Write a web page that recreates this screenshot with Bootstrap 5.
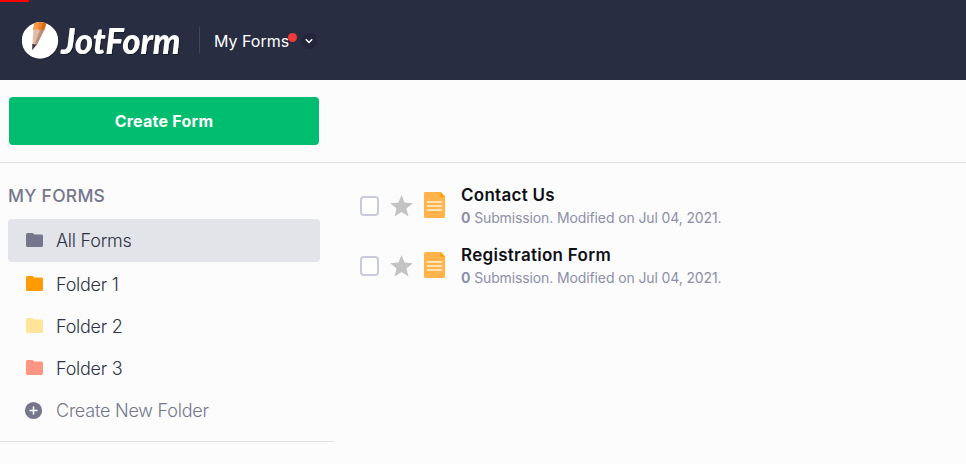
<!DOCTYPE html>
<html lang="en">
<head>
<meta charset="utf-8">
<meta name="viewport" content="width=device-width, initial-scale=1">
<title>My Forms</title>
<link rel="stylesheet" href="https://cdn.jsdelivr.net/npm/bootstrap@5.3.0/dist/css/bootstrap.min.css">
<style>
body{font-family:Inter,"Liberation Sans",sans-serif;background:#fcfcfd;color:#2c3345;height:464px;overflow:hidden}
.topbar{height:80px;background:#282d42;padding:0 22px}
.loader{width:29px;height:2px;background:#f00}
.brand{width:162px;height:64px}
.divider{width:1px;height:26px;background:#41465a;margin-left:15px}
.section-name{font-size:16px;line-height:24px;letter-spacing:0;margin-left:14px;padding-top:2px}
.dot{width:9px;height:9px;background:#f23a3c;left:74px;top:6px}
.chev{width:16px;height:16px;background:#212638;margin-left:12px;margin-top:2px}
.toolbar{height:83px;border-bottom:1px solid #e1e2e6;padding:17px 9px}
.btn-create{width:310px;height:48px;background:#01bd6f;border:0;border-radius:4px;font-size:16px;font-weight:700;letter-spacing:.25px}
.btn-create:hover{background:#01a862}
.side{width:334px;height:279px;border-bottom:1px solid #e1e2e6;padding:22px 0 0 8px}
.side h2{font-size:17.5px;line-height:22px;font-weight:500;letter-spacing:.25px;color:#75768c;margin:0 0 12px}
.folder{width:312px;height:42px;padding-left:17px;font-size:18px;font-weight:300;line-height:24px;letter-spacing:-.25px;color:#2c3345;text-decoration:none;border-radius:4px}
.folder svg{width:19px;height:16px;margin-right:12px}
.folder.current{height:43px;background:#e3e4ea;margin-bottom:2px}
.folder.create{color:#75768c;letter-spacing:-.22px}
.folder.current svg{margin-bottom:1px}
.folder:not(.current):not(.create) svg{margin-bottom:2px}
.entries{padding:20px 0 0 26px}
.entry{height:60px}
.tick{width:19px;height:20px;border:2px solid #c8ccda;border-radius:3px;background:#fff;margin:13px 0 0;box-shadow:none;flex:none}
.star{width:24px;height:24px;margin:11px 0 0 11px}
.doc{width:21px;height:26px;margin:9px 0 0 10px}
.info{margin-left:16px}
.info h3{font-size:17px;font-weight:600;line-height:24px;letter-spacing:.28px;margin:0;color:#0f1016}
.info p{font-size:14px;line-height:20px;letter-spacing:-.12px;margin:0;padding-top:1px;color:#8d8fa8;font-weight:400}
</style>
<script src="https://cdn.jsdelivr.net/npm/bootstrap@5.3.0/dist/js/bootstrap.bundle.min.js"></script>
</head>
<body>
<header class="topbar d-flex align-items-center text-white position-relative">
  <div class="loader position-absolute top-0 start-0"></div>
  <svg class="brand" viewBox="0 -10 162 64" role="img" aria-label="JotForm">
    <defs>
      <clipPath id="disc"><circle cx="18" cy="22.500" r="18.200"/></clipPath>
      <filter id="edge" x="-5%" y="-5%" width="115%" height="115%"><feDropShadow dx="1" dy="1" stdDeviation=".4" flood-color="#171b2b"/></filter>
    </defs>
    <circle cx="18.600" cy="23.200" r="18.200" fill="#1c2031"/>
    <circle cx="18" cy="22.500" r="18.200" fill="#fff"/>
    <g clip-path="url(#disc)">
      <path d="M13 2h12l-2 8-3 4-4-2-5 0z" fill="#f08327"/>
      <path d="M13 3h4l-1 9h-4.500z" fill="#f89b45"/>
      <path d="M21 3h4l-3 10-3-1z" fill="#d66b1e"/>
      <path d="M11.500 11.500l3-.5 3 1 4 .5-7 15-4-1z" fill="#e4bba5"/>
      <path d="M18 12l4.500-.5-8 16-2-.5z" fill="#b88e7b"/>
      <path d="M10.200 26l4.300.8-4.200 5.500z" fill="#3d3a40"/>
    </g>
    <text x="39" y="35.500" textLength="119.500" lengthAdjust="spacingAndGlyphs" font-family="Lato" font-size="36" font-weight="900" font-style="italic" fill="#fff" filter="url(#edge)">JotForm</text>
  </svg>
  <div class="divider"></div>
  <div class="section-name position-relative">My Forms<span class="dot rounded-circle position-absolute"></span></div>
  <div class="chev rounded-circle d-flex align-items-center justify-content-center">
    <svg width="8" height="6" viewBox="0 0 8 6" fill="none" stroke="#fff" stroke-width="1.500"><path d="M.8 1.200L4 4.500l3.200-3.300"/></svg>
  </div>
</header>
<div class="toolbar"><button class="btn btn-create text-white p-0 d-block">Create Form</button></div>
<div class="d-flex">
  <aside class="side flex-shrink-0">
    <h2>MY FORMS</h2>
    <nav class="d-flex flex-column">
      <a href="#" class="folder current d-flex align-items-center"><svg viewBox="0 0 19 16"><path d="M2.500 1h5l2 1.500h7q1.500 0 1.500 1.500v9.500q0 1.500-1.500 1.500h-14Q1 15 1 13.500v-11Q1 1 2.500 1z" fill="#75768c"/></svg><span>All Forms</span></a>
      <a href="#" class="folder d-flex align-items-center"><svg viewBox="0 0 19 16"><path d="M2.500 0h5l2 1.500h7q1.500 0 1.500 1.500v10.500q0 1.500-1.500 1.500h-14Q1 15 1 13.500v-12Q1 0 2.500 0z" fill="#ff9c05"/></svg><span>Folder 1</span></a>
      <a href="#" class="folder d-flex align-items-center"><svg viewBox="0 0 19 16"><path d="M2.500 0h5l2 1.500h7q1.500 0 1.500 1.500v10.500q0 1.500-1.500 1.500h-14Q1 15 1 13.500v-12Q1 0 2.500 0z" fill="#ffe49a"/></svg><span>Folder 2</span></a>
      <a href="#" class="folder d-flex align-items-center"><svg viewBox="0 0 19 16"><path d="M2.500 0h5l2 1.500h7q1.500 0 1.500 1.500v10.500q0 1.500-1.500 1.500h-14Q1 15 1 13.500v-12Q1 0 2.500 0z" fill="#ff9583"/></svg><span>Folder 3</span></a>
      <a href="#" class="folder create d-flex align-items-center"><svg viewBox="0 0 19 16" overflow="visible"><circle cx="8.500" cy="7.500" r="8.600" fill="#75768c"/><path d="M8.500 3.500v8M4.500 7.500h8" stroke="#fff" stroke-width="1.500"/></svg><span>Create New Folder</span></a>
    </nav>
  </aside>
  <main class="entries">
    <div class="entry d-flex">
      <input type="checkbox" class="form-check-input tick" aria-label="Select Contact Us">
      <svg class="star" viewBox="0 0 24 24"><path d="M11.500 1l3 7.500 8.300.7-6.400 5.300 2.100 7.900-7-4.300-7 4.300 2.100-7.900L.2 9.200l8.300-.7z" fill="#c3c3c4"/></svg>
      <svg class="doc" viewBox="0 0 21 26"><path d="M1.500 0H17l4 4.500v20q0 1.500-1.500 1.500h-18Q0 26 0 24.500v-23Q0 0 1.500 0z" fill="#ffb349"/><path d="M16.500 0L21 5h-3q-1.500 0-1.500-1.500z" fill="#ff9c05"/><path d="M3.500 10h14M3.500 14h14M3.500 18h14" stroke="#fff3dc" stroke-width="1.700" stroke-linecap="round"/></svg>
      <div class="info"><h3>Contact Us</h3><p><b>0</b> Submission. Modified on Jul 04, 2021.</p></div>
    </div>
    <div class="entry d-flex">
      <input type="checkbox" class="form-check-input tick" aria-label="Select Registration Form">
      <svg class="star" viewBox="0 0 24 24"><path d="M11.500 1l3 7.500 8.300.7-6.400 5.300 2.100 7.900-7-4.300-7 4.300 2.100-7.900L.2 9.200l8.300-.7z" fill="#c3c3c4"/></svg>
      <svg class="doc" viewBox="0 0 21 26"><path d="M1.500 0H17l4 4.500v20q0 1.500-1.500 1.500h-18Q0 26 0 24.500v-23Q0 0 1.500 0z" fill="#ffb349"/><path d="M16.500 0L21 5h-3q-1.500 0-1.500-1.500z" fill="#ff9c05"/><path d="M3.500 10h14M3.500 14h14M3.500 18h14" stroke="#fff3dc" stroke-width="1.700" stroke-linecap="round"/></svg>
      <div class="info"><h3>Registration Form</h3><p><b>0</b> Submission. Modified on Jul 04, 2021.</p></div>
    </div>
  </main>
</div>
</body>
</html>
